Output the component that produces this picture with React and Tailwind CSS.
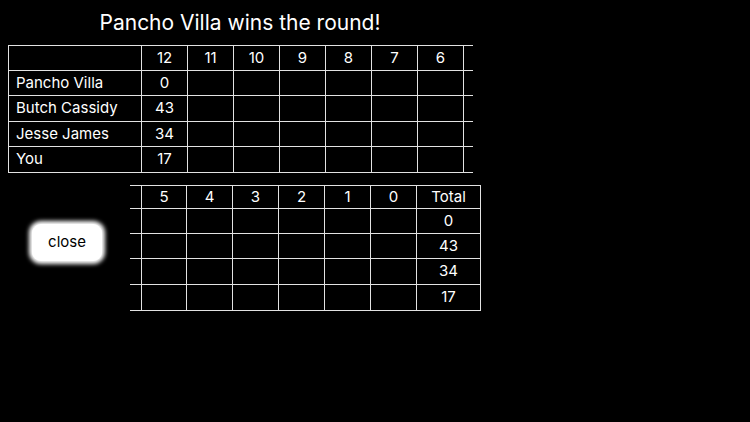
import React from 'react';

const players = [
  { name: 'Pancho Villa', first: '0', total: '0' },
  { name: 'Butch Cassidy', first: '43', total: '43' },
  { name: 'Jesse James', first: '34', total: '34' },
  { name: 'You', first: '17', total: '17' },
];

const topRounds = ['12', '11', '10', '9', '8', '7', '6'];
const bottomRounds = ['5', '4', '3', '2', '1', '0'];

// row heights picked to land the grid lines where the screenshot has them
const topHeights = ['h-[26px]', 'h-[25px]', 'h-[26px]', 'h-[25px]', 'h-[26px]'];
const bottomHeights = ['h-[24px]', 'h-[25px]', 'h-[25px]', 'h-[26px]', 'h-[26px]'];

const line = 'border-[#e2e2e2]';

const Cell = ({ className = '', children }) => (
  <div className={`flex items-center border-r border-b ${line} ${className}`}>{children}</div>
);

const TopTable = () => {
  const rows = [
    { label: '', cells: topRounds },
    ...players.map((p) => ({ label: p.name, cells: [p.first, '', '', '', '', '', ''] })),
  ];
  return (
    <div className="ml-[8px] flex flex-col">
      {rows.map((row, r) => (
        <div key={r} className={`flex ${topHeights[r]}`}>
          <Cell className={`w-[134px] border-l pl-[7px] ${r === 0 ? 'border-t' : ''}`}>{row.label}</Cell>
          {row.cells.map((c, i) => (
            <Cell key={i} className={`w-[46px] justify-center ${r === 0 ? 'border-t' : ''}`}>
              {c}
            </Cell>
          ))}
          {/* the horizontal rules run a little past the last column */}
          <div className={`w-[9px] border-b ${line} ${r === 0 ? 'border-t' : ''}`} />
        </div>
      ))}
    </div>
  );
};

const BottomTable = () => {
  const rows = [
    { cells: bottomRounds, total: 'Total' },
    ...players.map((p) => ({ cells: ['', '', '', '', '', ''], total: p.total })),
  ];
  return (
    <div className="flex flex-col">
      {rows.map((row, r) => (
        <div key={r} className={`flex ${bottomHeights[r]}`}>
          <div className={`w-[11px] border-b ${line} ${r === 0 ? 'border-t' : ''}`} />
          {row.cells.map((c, i) => (
            <Cell
              key={i}
              className={`w-[46px] justify-center ${i === 0 ? 'border-l' : ''} ${r === 0 ? 'border-t' : ''}`}
            >
              {c}
            </Cell>
          ))}
          <Cell className={`w-[64px] justify-center ${r === 0 ? 'border-t' : ''}`}>{row.total}</Cell>
        </div>
      ))}
    </div>
  );
};

export default function App() {
  return (
    <div
      className="w-[750px] h-[422px] bg-black text-white overflow-hidden"
      style={{ fontFamily: 'Inter, "Liberation Sans", sans-serif' }}
    >
      <div className="ml-[8px] w-[464px] h-[45px] pt-[9px] text-center text-[21px] leading-[28px]">
        Pancho Villa wins the round!
      </div>
      <div className="text-[15px]">
        <TopTable />
        <div className="mt-[12px] flex">
          <div className="w-[130px] shrink-0 pt-[39px] pl-[32px]">
            <button className="w-[70px] h-[37px] rounded-[9px] bg-white text-black text-[15px] shadow-[0_0_4px_3px_white]">
              close
            </button>
          </div>
          <BottomTable />
        </div>
      </div>
    </div>
  );
}
